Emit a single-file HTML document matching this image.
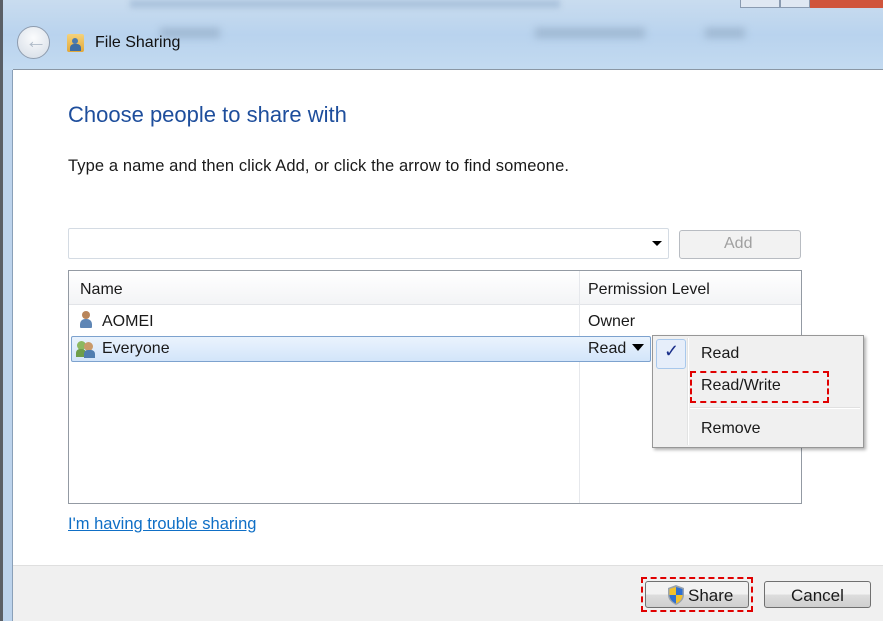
<!DOCTYPE html>
<html><head><style>
*{margin:0;padding:0;box-sizing:border-box}
body{width:883px;height:621px;overflow:hidden;position:relative;font-family:"Liberation Sans",sans-serif;font-size:16px;color:#1a1a1a;background:#fff}
.a{position:absolute}
.t{position:absolute;white-space:nowrap}
</style></head><body>
<div class="a" style="left:0;top:0;width:883px;height:70px;background:linear-gradient(180deg,#c9dcef 0%,#b9d3ee 50%,#c3daf0 100%)"></div>
<div class="a" style="left:130px;top:0;width:430px;height:8px;background:#aac2dc;filter:blur(3px)"></div>
<div class="a" style="left:160px;top:28px;width:60px;height:10px;background:#9fb8d2;filter:blur(4px)"></div>
<div class="a" style="left:535px;top:28px;width:110px;height:10px;background:#9fb8d2;filter:blur(4px)"></div>
<div class="a" style="left:705px;top:28px;width:40px;height:10px;background:#9fb8d2;filter:blur(4px)"></div>
<div class="a" style="left:740px;top:0;width:40px;height:8px;background:#dfe8f2;border:1px solid #8a9bb0;border-top:none"></div>
<div class="a" style="left:780px;top:0;width:30px;height:8px;background:#dfe8f2;border:1px solid #8a9bb0;border-top:none"></div>
<div class="a" style="left:810px;top:0;width:73px;height:8px;background:#d0553c"></div>
<div class="a" style="left:17px;top:26px;width:33px;height:33px;border-radius:50%;border:1px solid #8e9cae;background:radial-gradient(circle at 50% 35%,#fbfcfd,#d3dbe5)"></div>
<div class="t" style="left:25px;top:28px;font-size:22px;color:#b0bbc8">&#8592;</div>
<div class="a" style="left:67px;top:34px;width:17px;height:18px;background:linear-gradient(#f5d27a,#e2a93a);border-radius:2px"></div>
<div class="a" style="left:72px;top:38px;width:6px;height:6px;border-radius:50%;background:#4a7ab0"></div>
<div class="a" style="left:70px;top:44px;width:11px;height:7px;border-radius:4px 4px 0 0;background:#3d6da5"></div>
<div class="t" style="left:95px;top:34px;font-size:16px;color:#111">File Sharing</div>
<div class="a" style="left:0;top:0;width:3px;height:621px;background:#5a5f66"></div>
<div class="a" style="left:3px;top:70px;width:10px;height:551px;background:#bcd3ec"></div>
<div class="a" style="left:12px;top:70px;width:1px;height:551px;background:#8aa0b8"></div>
<div class="a" style="left:13px;top:69px;width:870px;height:1px;background:#8a96a4"></div>
<div class="t" style="left:68px;top:102px;font-size:22px;color:#1e4e9c">Choose people to share with</div>
<div class="t" style="left:68px;top:157px;font-size:16.5px;letter-spacing:0.1px">Type a name and then click Add, or click the arrow to find someone.</div>
<div class="a" style="left:68px;top:228px;width:601px;height:31px;border:1px solid #d4dbe3;border-radius:2px;background:#fff"></div>
<div class="a" style="left:652px;top:241px;width:0;height:0;border-left:5px solid transparent;border-right:5px solid transparent;border-top:5px solid #000"></div>
<div class="a" style="left:679px;top:230px;width:122px;height:29px;border:1px solid #b8bcc2;border-radius:3px;background:#f2f2f2"></div>
<div class="t" style="left:724px;top:235px;font-size:16px;color:#a0a0a0">Add</div>
<div class="a" style="left:68px;top:270px;width:734px;height:234px;border:1px solid #939aa3;background:#fff"></div>
<div class="a" style="left:69px;top:271px;width:732px;height:34px;background:linear-gradient(#fff,#f3f4f6);border-bottom:1px solid #e2e4e8"></div>
<div class="a" style="left:579px;top:271px;width:1px;height:232px;background:#e6e8ec"></div>
<div class="t" style="left:80px;top:281px">Name</div>
<div class="t" style="left:588px;top:281px">Permission Level</div>
<div class="a" style="left:82px;top:311px;width:8px;height:8px;border-radius:50%;background:#b8855a"></div>
<div class="a" style="left:80px;top:319px;width:12px;height:9px;border-radius:5px 5px 1px 1px;background:#5f86b5"></div>
<div class="t" style="left:102px;top:313px">AOMEI</div>
<div class="t" style="left:588px;top:313px">Owner</div>
<div class="a" style="left:71px;top:336px;width:580px;height:26px;border:1px solid #7da2ce;border-radius:2px;background:linear-gradient(#eaf3fd,#d3e5fa)"></div>
<div class="a" style="left:77px;top:341px;width:9px;height:9px;border-radius:50%;background:#8cb860"></div>
<div class="a" style="left:84px;top:342px;width:9px;height:9px;border-radius:50%;background:#c99a6a"></div>
<div class="a" style="left:76px;top:349px;width:10px;height:8px;border-radius:4px 4px 0 0;background:#6e9e4a"></div>
<div class="a" style="left:84px;top:350px;width:11px;height:8px;border-radius:4px 4px 0 0;background:#4f7db0"></div>
<div class="t" style="left:102px;top:340px">Everyone</div>
<div class="t" style="left:588px;top:340px">Read</div>
<div class="a" style="left:632px;top:344px;width:0;height:0;border-left:6px solid transparent;border-right:6px solid transparent;border-top:7px solid #000"></div>
<div class="a" style="left:652px;top:335px;width:212px;height:113px;border:1px solid #979797;background:#f0f0f0;box-shadow:2px 2px 3px rgba(0,0,0,.3)"></div>
<div class="a" style="left:687px;top:338px;width:1px;height:107px;background:#e2e3e3"></div>
<div class="a" style="left:688px;top:338px;width:1px;height:107px;background:#fff"></div>
<div class="a" style="left:656px;top:339px;width:30px;height:30px;border:1px solid #a8c8ec;border-radius:3px;background:#e6eefa"></div>
<div class="t" style="left:664px;top:341px;font-size:18px;color:#1a2f8a">&#10003;</div>
<div class="t" style="left:701px;top:345px">Read</div>
<div class="t" style="left:701px;top:377px">Read/Write</div>
<div class="a" style="left:690px;top:371px;width:139px;height:32px;border:2px dashed #e00000"></div>
<div class="a" style="left:690px;top:407px;width:170px;height:1px;background:#e0e0e0"></div>
<div class="a" style="left:690px;top:408px;width:170px;height:1px;background:#fff"></div>
<div class="t" style="left:701px;top:420px">Remove</div>
<div class="t" style="left:68px;top:515px;font-size:16.5px;color:#0f6fc6;text-decoration:underline">I'm having trouble sharing</div>
<div class="a" style="left:13px;top:565px;width:870px;height:56px;background:#f0f0f0;border-top:1px solid #dfdfdf"></div>
<div class="a" style="left:641px;top:577px;width:112px;height:35px;border:2px dashed #e00000"></div>
<div class="a" style="left:645px;top:581px;width:104px;height:27px;border:1px solid #707070;border-radius:3px;background:linear-gradient(#f2f2f2 50%,#dddddd 50%,#cfcfcf)"></div>
<svg class="a" style="left:666px;top:584px" width="20" height="22" viewBox="0 0 20 22"><path d="M10 1 L18 4 V11 C18 16 14 19 10 21 C6 19 2 16 2 11 V4 Z" fill="#9aa3ad"/><path d="M10 3 V11 H16.5 V5 Z" fill="#2f6fd0"/><path d="M10 3 V11 H3.5 V5 Z" fill="#f2c12e"/><path d="M10 11 V19.5 C13.5 18 16.5 15 16.5 11 Z" fill="#f2c12e"/><path d="M10 11 V19.5 C6.5 18 3.5 15 3.5 11 Z" fill="#2f6fd0"/></svg>
<div class="t" style="left:688px;top:586px;font-size:17px">Share</div>
<div class="a" style="left:764px;top:581px;width:107px;height:27px;border:1px solid #707070;border-radius:3px;background:linear-gradient(#f2f2f2 50%,#dddddd 50%,#cfcfcf)"></div>
<div class="t" style="left:791px;top:586px;font-size:17px">Cancel</div>
</body></html>
